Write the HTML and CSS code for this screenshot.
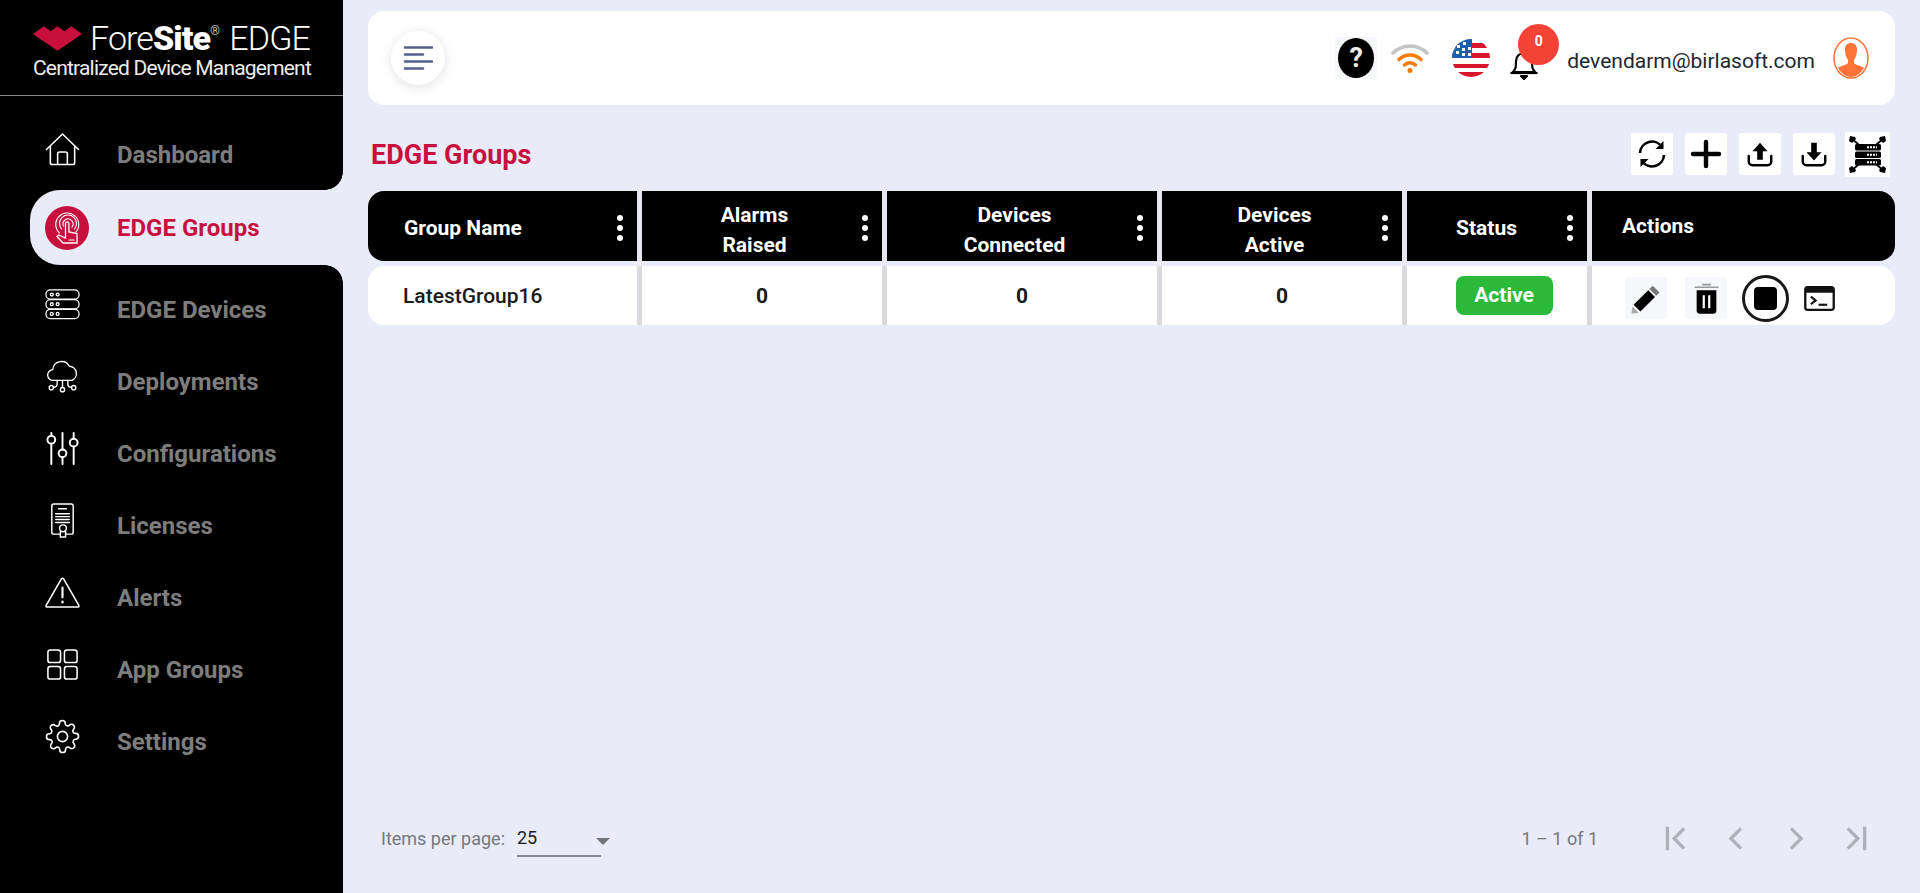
FILE: index.html

```html
<!DOCTYPE html>
<html lang="en">
<head>
  <meta charset="UTF-8" />
  <title>ForeSite EDGE - EDGE Groups</title>
  <link rel="stylesheet" href="styles.css">
</head>
<body>
  <aside class="sidebar">
    <div class="brand">
      <div class="brand-top">
        <svg class="brand-mark" viewBox="0 0 50 26"><path fill="#c8103e" d="M0 9 11 1l7 5 7-5 7 5 7-5 11 8-25 17z"/></svg>
        <span class="brand-name">Fore<b>Site</b><sup>®</sup> EDGE</span>
      </div>
      <div class="brand-sub">Centralized Device Management</div>
    </div>

    <nav class="nav">
      <a class="nav-item">
        <svg class="nav-icon" viewBox="0 0 36 36" fill="none" stroke="#fff" stroke-width="1.6" stroke-linejoin="round" stroke-linecap="round"><path d="M1.5 18 18 2l16.500 16"/><path d="M5.500 15v16.500a2 2 0 0 0 2 2h21a2 2 0 0 0 2-2V15"/><path d="M13 33.500V22.500a2 2 0 0 1 2-2h6a2 2 0 0 1 2 2v11"/></svg>
        <span>Dashboard</span>
      </a>
      <a class="nav-item active">
        <svg class="nav-icon big" viewBox="0 0 44 44" fill="none" stroke="#fff" stroke-width="1.1" stroke-linecap="round"><circle cx="22" cy="22" r="22" fill="#c8103e" stroke="none"/><path d="M14.500 27a11.500 11.500 0 1 1 16.500-1"/><path d="M16.500 23a8.500 8.500 0 1 1 13 0"/><path d="M18.500 20a5 5 0 1 1 8.500 1"/><path d="M20.500 17.500a1.700 1.700 0 0 1 3.400 0V26l8.100 1.500V37H18l-6-6.500 1.500-1.500 7 3z" fill="#c8103e" stroke-width="1.300"/><path d="M24 34h5"/></svg>
        <span>EDGE Groups</span>
      </a>
      <a class="nav-item">
        <svg class="nav-icon" viewBox="0 0 36 32" fill="none" stroke="#fff" stroke-width="1.3"><rect x="1" y="1" width="34" height="9.500" rx="4.500"/><rect x="1" y="11" width="34" height="9.500" rx="4.500"/><rect x="1" y="21" width="34" height="9.500" rx="4.500"/><circle cx="7" cy="5.700" r="1.500"/><circle cx="13" cy="5.700" r="1.500"/><circle cx="7" cy="15.700" r="1.500"/><circle cx="13" cy="15.700" r="1.500"/><circle cx="7" cy="25.700" r="1.500"/><circle cx="13" cy="25.700" r="1.500"/></svg>
        <span>EDGE Devices</span>
      </a>
      <a class="nav-item">
        <svg class="nav-icon" viewBox="0 0 36 36" fill="none" stroke="#fff" stroke-width="1.4" stroke-linecap="round" stroke-linejoin="round"><path d="M10 22H8.500a5.500 5.500 0 0 1-.5-11 9 9 0 0 1 17-3.500 7.500 7.500 0 0 1 2.500 14.500z"/><path d="M12.500 22v4a3 3 0 0 1-3 3H8.500"/><path d="M18 22v7.500"/><path d="M23.500 22v4a3 3 0 0 0 3 3h1"/><circle cx="6.500" cy="29.500" r="2.200"/><circle cx="18" cy="31.500" r="2.200"/><circle cx="29.500" cy="29.500" r="2.200"/></svg>
        <span>Deployments</span>
      </a>
      <a class="nav-item">
        <svg class="nav-icon" viewBox="0 0 36 36" fill="none" stroke="#fff" stroke-width="2" stroke-linecap="round"><path d="M6.500 2v3M6.500 13v21M18 2v17M18 27v7M29.500 2v6M29.500 16v18"/><circle cx="6.500" cy="9" r="4"/><circle cx="18" cy="23" r="4"/><circle cx="29.500" cy="12" r="4"/></svg>
        <span>Configurations</span>
      </a>
      <a class="nav-item">
        <svg class="nav-icon" viewBox="0 0 36 36" fill="none" stroke="#fff" stroke-width="1.5" stroke-linecap="round" stroke-linejoin="round"><path d="M15 32H9a2 2 0 0 1-2-2V3a2 2 0 0 1 2-2h18a2 2 0 0 1 2 2v27a2 2 0 0 1-2 2h-5"/><path d="M14 6h8M11 11h14M11 14h14M11 17h14M11 20h14"/><circle cx="18.500" cy="26" r="3.500"/><path d="M15.800 29v6h5.400v-6"/></svg>
        <span>Licenses</span>
      </a>
      <a class="nav-item">
        <svg class="nav-icon" viewBox="0 0 36 32" fill="none" stroke="#fff" stroke-width="1.6" stroke-linejoin="round" stroke-linecap="round"><path d="M17 1.800a1.200 1.200 0 0 1 2 0L34.800 29.300a1.200 1.200 0 0 1-1 1.700H2.200a1.200 1.200 0 0 1-1-1.700z"/><path d="M18 11v10" stroke-width="2.200"/><path d="M18 25.500v.5" stroke-width="2.400"/></svg>
        <span>Alerts</span>
      </a>
      <a class="nav-item">
        <svg class="nav-icon" viewBox="0 0 36 36" fill="none" stroke="#fff" stroke-width="1.6"><rect x="3" y="3" width="13" height="13" rx="2.500"/><rect x="20" y="3" width="13" height="13" rx="2.500"/><rect x="3" y="20" width="13" height="13" rx="2.500"/><rect x="20" y="20" width="13" height="13" rx="2.500"/></svg>
        <span>App Groups</span>
      </a>
      <a class="nav-item">
        <svg class="nav-icon" viewBox="0 0 24 24" fill="none" stroke="#fff" stroke-width="1.100" stroke-linejoin="round"><circle cx="12" cy="12" r="3.500"/><path d="M19.400 15a1.650 1.650 0 0 0 .33 1.820l.06.06a2 2 0 1 1-2.830 2.830l-.06-.06a1.650 1.650 0 0 0-2.800 1.170V21a2 2 0 1 1-4 0v-.09a1.650 1.650 0 0 0-2.800-1.170l-.06.06a2 2 0 1 1-2.830-2.830l.06-.06a1.650 1.650 0 0 0-1.170-2.800H3a2 2 0 1 1 0-4h.09a1.650 1.650 0 0 0 1.170-2.800l-.06-.06a2 2 0 1 1 2.830-2.830l.06.06a1.650 1.650 0 0 0 2.800-1.170V3a2 2 0 1 1 4 0v.09a1.650 1.650 0 0 0 2.800 1.170l.06-.06a2 2 0 1 1 2.830 2.830l-.06.06a1.650 1.650 0 0 0 1.170 2.800H21a2 2 0 1 1 0 4h-.09a1.650 1.650 0 0 0-1.510 1z"/></svg>
        <span>Settings</span>
      </a>
    </nav>
  </aside>

  <main class="main">
    <header class="topbar">
      <button class="menu-btn">
        <svg viewBox="0 0 30 24" width="30" height="24" stroke="#55608f" stroke-width="2.600" stroke-linecap="round"><path d="M2 3h27M2 10h18M2 17h27M2 24h18" transform="translate(0 -1.500)"/></svg>
      </button>
      <div class="topbar-right">
        <span class="help-btn"><span class="help-dot">?</span></span>
        <svg class="wifi" viewBox="0 0 38 32" width="38" height="32" fill="none" stroke-linecap="round" stroke-width="3.500"><path d="M2 11a24 24 0 0 1 34 0" stroke="#c4c4c4"/><path d="M8 17.500a16 16 0 0 1 22 0" stroke="#f57c00"/><path d="M13.500 23a8 8 0 0 1 11 0" stroke="#f57c00"/><circle cx="19" cy="28.500" r="2.500" fill="#f57c00" stroke="none"/></svg>
        <svg class="flag" viewBox="0 0 38 38" width="38" height="38"><defs><clipPath id="flag-clip"><ellipse cx="19" cy="19" rx="19" ry="19"/></clipPath></defs><g clip-path="url(#flag-clip)"><rect width="38" height="38" fill="#fff"/><path fill="#d9142b" d="M0 4h38v5H0zM0 14h38v5H0zM0 25h38v4H0zM0 33h38v5H0z"/><rect width="20" height="19" fill="#1b5fb0"/><path fill="#fff" d="M5 6h3v3H5zM11 3h3v3h-3zM16 8h3v3h-3zM10 9h3v3h-3zM4 12h3v3H4zM10 14h3v3h-3zM16 14h3v3h-3z"/></g></svg>
        <span class="bell">
          <svg viewBox="0 0 30 36" width="30" height="36" fill="none" stroke="#000" stroke-width="2.200" stroke-linejoin="round"><path d="M4 28c3-3 3-6 3-11a8 8 0 0 1 16 0c0 5 0 8 3 11z"/><path d="M1.500 29h27"/><path d="M12 32h6l-3 3z" fill="#000"/></svg>
          <span class="badge">0</span>
        </span>
        <span class="user-mail">devendarm@birlasoft.com</span>
        <svg class="avatar" viewBox="0 0 36 42" width="36" height="42"><ellipse cx="18" cy="21" rx="17" ry="20" fill="#fff" stroke="#ff7338" stroke-width="1.500"/><path fill="#ff7338" d="M12 12c0-4 3-6 6-6s6 2 6 6c0 5-1 8-3 11v3c1 2 8 3 10 5-3 5-8 9-13 9s-10-4-13-9c2-2 9-3 10-5v-3c-2-3-3-6-3-11z"/></svg>
      </div>
    </header>

    <div class="title-row">
      <h1 class="page-title">EDGE Groups</h1>
      <div class="toolbar">
        <span class="tool-btn"><svg viewBox="0 0 32 32" width="32" height="32" fill="none" stroke="#000" stroke-width="2.600"><path d="M4 15a12 12 0 0 1 22-6"/><path d="M28 17a12 12 0 0 1-22 6"/><path d="M27.500 3v8h-8" stroke-width="0" fill="#000"/><path d="M4.500 29v-8h8" stroke-width="0" fill="#000"/></svg></span>
        <span class="tool-btn"><svg viewBox="0 0 32 32" width="32" height="32" stroke="#000" stroke-width="4.400" stroke-linecap="round"><path d="M16 4v24M3 16h26"/></svg></span>
        <span class="tool-btn"><svg viewBox="0 0 32 32" width="30" height="30"><path fill="none" stroke="#000" stroke-width="2.600" stroke-linecap="round" d="M4 18v6a4 4 0 0 0 4 4h16a4 4 0 0 0 4-4v-6"/><path d="M16 4 8 13h5v9h6v-9h5z"/></svg></span>
        <span class="tool-btn"><svg viewBox="0 0 32 32" width="30" height="30"><path fill="none" stroke="#000" stroke-width="2.600" stroke-linecap="round" d="M4 18v6a4 4 0 0 0 4 4h16a4 4 0 0 0 4-4v-6"/><path d="M16 23 8 14h5V4h6v10h5z"/></svg></span>
        <span class="tool-btn wide"><svg viewBox="0 0 45 45" width="45" height="45"><path fill="none" stroke="#000" stroke-width="1.800" stroke-linecap="round" d="M6 6l7 6M39 6l-7 6M6 39l7-6M39 39l-7-6"/><path d="M4 9l1-5 5 1 1 2-4 4zM41 9l-1-5-5 1-1 2 4 4zM4 36l1 5 5-1 1-2-4-4zM41 36l-1 5-5-1-1-2 4-4z"/><rect x="10" y="12" width="26" height="6.500" rx="1.500"/><rect x="10" y="19.500" width="26" height="6.500" rx="1.500"/><rect x="10" y="27" width="26" height="6.500" rx="1.500"/><path stroke="#fff" stroke-width="2" d="M22 15.200h10M22 22.700h10M22 30.200h10" stroke-dasharray="2 1"/></svg></span>
      </div>
    </div>

    <section class="grid-table">
      <div class="cell head left first"><span class="head-label">Group Name</span><i class="kebab"></i></div>
      <div class="cell head two-line"><span class="head-label">Alarms<br>Raised</span><i class="kebab"></i></div>
      <div class="cell head two-line"><span class="head-label">Devices<br>Connected</span><i class="kebab"></i></div>
      <div class="cell head two-line"><span class="head-label">Devices<br>Active</span><i class="kebab"></i></div>
      <div class="cell head status-head"><span class="head-label">Status</span><i class="kebab"></i></div>
      <div class="cell head left last actions-head"><span class="head-label">Actions</span></div>

      <div class="cell row left first">LatestGroup16</div>
      <div class="cell row">0</div>
      <div class="cell row">0</div>
      <div class="cell row">0</div>
      <div class="cell row status-cell"><span class="status">Active</span></div>
      <div class="cell row last actions">
        <span class="act-btn"><svg viewBox="0 0 32 32" width="36" height="36"><path d="M22 5l6 6-3 3-6-6z" fill="#777"/><path d="M18 9l6 6-13 13-6-6z"/><path d="M4 23.500 9.500 29 3 30z" fill="#aaa"/></svg></span>
        <span class="act-btn"><svg viewBox="0 0 32 32" width="35" height="35"><path d="M5 5h22v1.500H5zM12 2.500h8V4h-8z" fill="#999"/><path d="M7 8.500h18V27a3 3 0 0 1-3 3H10a3 3 0 0 1-3-3z"/><path d="M12.500 13h2v12h-2zM17.500 13h2v12h-2z" fill="#fff"/></svg></span>
        <span class="stop-btn"><span class="stop-square"></span></span>
        <svg class="term" viewBox="0 0 32 26" width="31" height="25"><rect x="1.200" y="1.200" width="29.600" height="23.600" rx="2.500" fill="#fff" stroke="#111" stroke-width="2.400"/><rect x="1" y="1" width="30" height="6" fill="#111"/><path d="M7 11l5 4-5 4" fill="none" stroke="#111" stroke-width="2.200"/><path d="M15 19.500h9" stroke="#111" stroke-width="2.200"/></svg>
      </div>
    </section>

    <footer class="pager">
      <div class="pager-size">
        <span class="pager-label">Items per page:</span>
        <div class="pager-select"><span>25</span><i class="select-arrow"></i></div>
      </div>
      <div class="pager-nav">
        <span class="pager-range">1 – 1 of 1</span>
        <svg class="pg-icon first-pg" viewBox="0 0 24 24" width="27" height="27" fill="none" stroke="#afb1ba" stroke-width="3"><path d="M3 1.500v21M18 3 9 12l9 9"/></svg>
        <svg class="pg-icon" viewBox="0 0 24 24" width="27" height="27" fill="none" stroke="#afb1ba" stroke-width="3"><path d="M16 3l-9 9 9 9"/></svg>
        <svg class="pg-icon" viewBox="0 0 24 24" width="27" height="27" fill="none" stroke="#afb1ba" stroke-width="3"><path d="M8 3l9 9-9 9"/></svg>
        <svg class="pg-icon" viewBox="0 0 24 24" width="27" height="27" fill="none" stroke="#afb1ba" stroke-width="3"><path d="M21 1.500v21M6 3l9 9-9 9"/></svg>
      </div>
    </footer>
  </main>
</body>
</html>
```

FILE: styles.css

```css
* {
  box-sizing: border-box;
}
html, body {
  height: 100%;
}
body {
  margin: 0;
  display: flex;
  overflow: hidden;
  font-family: Roboto, "Liberation Sans", sans-serif;
  background: #e9ecf8;
  color: #1a1a1a;
}

/* sidebar */
.sidebar {
  width: 343px;
  flex: none;
  background: #000;
  color: #fff;
}
.brand {
  height: 96px;
  padding: 20px 0 0 33px;
  border-bottom: 1px solid #8a8a8a;
}
.brand-top {
  display: flex;
  align-items: center;
  gap: 8px;
  height: 36px;
}
.brand-mark {
  width: 49px;
  height: 26px;
}
.brand-name {
  font-size: 34px;
  font-weight: 300;
  letter-spacing: -0.9px;
  white-space: nowrap;
}
.brand-name b {
  font-weight: 900;
}
.brand-name sup {
  font-size: 12px;
  vertical-align: 15px;
  line-height: 0;
  margin-right: 3px;
}
.brand-sub {
  font-size: 21px;
  font-weight: 400;
  color: #eee;
  letter-spacing: -0.8px;
  line-height: 24px;
  white-space: nowrap;
}
.nav {
  padding-top: 22px;
}
.nav-item {
  position: relative;
  display: flex;
  align-items: center;
  height: 72px;
  padding-left: 45px;
  font-size: 24px;
  font-weight: 700;
  color: #7d7d7d;
}
.nav-item span {
  position: absolute;
  left: 117px;
  margin-top: 2px;
}
.nav-icon {
  width: 35px;
  height: 35px;
  margin-top: -9px;
}
.nav-icon.big {
  width: 44px;
  height: 44px;
  margin-top: 0;
}
.nav-item.active {
  height: 75px;
  margin: 0 0 8px 30px;
  padding-left: 15px;
  background: #e9ecf8;
  color: #c8103e;
  border-radius: 30px 0 0 30px;
}
.nav-item.active span {
  left: 87px;
  margin-top: 0;
}
.nav-item.active::before,
.nav-item.active::after {
  content: "";
  position: absolute;
  right: 0;
  width: 18px;
  height: 18px;
}
.nav-item.active::before {
  top: -18px;
  background: radial-gradient(circle at 0 0, #000 17.500px, #e9ecf8 18px);
}
.nav-item.active::after {
  bottom: -18px;
  background: radial-gradient(circle at 0 100%, #000 17.500px, #e9ecf8 18px);
}

/* main column */
.main {
  flex: 1;
  display: flex;
  flex-direction: column;
  min-width: 0;
  padding: 11px 25px 0;
}
.topbar {
  height: 94px;
  flex: none;
  display: flex;
  align-items: center;
  justify-content: space-between;
  padding: 0 26px 0 23px;
  background: #fff;
  border-radius: 16px;
}
.menu-btn {
  width: 54px;
  height: 54px;
  padding: 0;
  display: flex;
  align-items: center;
  justify-content: center;
  background: #fff;
  border: 0;
  border-radius: 50%;
  box-shadow: 0 2px 12px rgba(0, 0, 0, 0.12);
}
.topbar-right {
  display: flex;
  align-items: center;
  height: 100%;
}
.help-btn {
  width: 42px;
  height: 42px;
  display: flex;
  align-items: center;
  justify-content: center;
  background: #f5f7fa;
  border-radius: 2px;
}
.help-dot {
  width: 36px;
  height: 40px;
  border-radius: 50%;
  background: #000;
  color: #eee;
  font-size: 27px;
  font-weight: 700;
  line-height: 40px;
  text-align: center;
}
.wifi {
  margin-left: 14px;
}
.flag {
  margin-left: 23px;
}
.bell {
  position: relative;
  display: flex;
  margin-left: 19px;
  margin-top: 8px;
}
.badge {
  position: absolute;
  top: -20px;
  left: 9px;
  width: 41px;
  height: 41px;
  border-radius: 50%;
  background: #f44336;
  color: #fff;
  font-size: 14px;
  font-weight: 700;
  line-height: 34px;
  text-align: center;
}
.user-mail {
  margin-left: 28px;
  margin-top: 5px;
  font-size: 21px;
  color: #1c2733;
}
.avatar {
  margin-left: 18px;
}

.title-row {
  height: 86px;
  flex: none;
  display: flex;
  align-items: center;
  justify-content: space-between;
  padding-top: 12px;
}
.page-title {
  margin: 2px 0 0 3px;
  font-size: 27px;
  font-weight: 700;
  color: #c8103e;
}
.toolbar {
  display: flex;
  align-items: center;
  gap: 12px;
  margin-right: 5px;
}
.tool-btn {
  width: 42px;
  height: 42px;
  display: flex;
  align-items: center;
  justify-content: center;
  background: #fff;
  border-radius: 3px;
}
.tool-btn.wide {
  width: 45px;
  height: 45px;
  margin-left: -2px;
  border-radius: 0;
}

/* table */
.grid-table {
  display: grid;
  grid-template-columns: 274px 245px 275px 245px 185px 303px;
  grid-template-rows: 70px 59px;
  row-gap: 5px;
}
.cell {
  display: flex;
  align-items: center;
  justify-content: center;
  border-right: 5px solid #d9d9de;
  font-size: 21px;
  font-weight: 700;
}
.head {
  position: relative;
  padding-top: 3px;
  padding-right: 15px;
  background: #000;
  background-clip: padding-box;
  border-right-color: #e4e5ee;
  color: #fff;
  font-size: 21px;
  line-height: 30px;
  text-align: center;
}
.head.two-line {
  padding-top: 7px;
}
.head.status-head {
  padding-right: 21px;
}
.head.left {
  justify-content: flex-start;
  padding-left: 36px;
}
.actions-head {
  padding-top: 0;
  padding-left: 30px !important;
  border-right: 0;
}
.kebab {
  position: absolute;
  right: 14px;
  top: 50%;
  width: 6px;
  height: 6px;
  margin-top: -11px;
  border-radius: 50%;
  background: #fff;
  box-shadow: 0 10px 0 #fff, 0 20px 0 #fff;
}
.row {
  background: #fff;
  background-clip: padding-box;
}
.row.left {
  justify-content: flex-start;
  padding-left: 35px;
  font-weight: 500;
}
.first {
  border-radius: 16px 0 0 16px;
}
.last {
  border-right: 0;
  border-radius: 0 16px 16px 0;
}
.status-cell {
  padding-left: 14px;
}
.status {
  width: 97px;
  height: 39px;
  border-radius: 8px;
  background: #2bb93a;
  color: #fff;
  line-height: 39px;
  text-align: center;
}
.actions {
  justify-content: flex-start;
  padding: 5px 0 0 33px;
}
.act-btn {
  width: 42px;
  height: 42px;
  margin-right: 18px;
  display: flex;
  align-items: center;
  justify-content: center;
  background: #f5f7fa;
  border-radius: 3px;
}
.stop-btn {
  width: 47px;
  height: 47px;
  display: flex;
  align-items: center;
  justify-content: center;
  border: 3px solid #1a1a1a;
  border-radius: 50%;
  margin-left: -3px;
}
.stop-square {
  width: 23px;
  height: 23px;
  border-radius: 4px;
  background: #000;
}
.term {
  margin-left: 15px;
}

/* pagination */
.pager {
  margin-top: auto;
  height: 62px;
  margin-bottom: 24px;
  flex: none;
  display: flex;
  align-items: center;
  justify-content: space-between;
  padding-left: 13px;
}
.pager-size {
  display: flex;
  align-items: center;
}
.pager-label {
  font-size: 18px;
  color: #76777f;
}
.pager-select {
  position: relative;
  width: 84px;
  height: 36px;
  margin-left: 12px;
  margin-top: 2px;
  padding-top: 6px;
  font-size: 18px;
  border-bottom: 2px solid #8b8b92;
}
.select-arrow {
  position: absolute;
  right: -9px;
  top: 17px;
  border-left: 7px solid transparent;
  border-right: 7px solid transparent;
  border-top: 7px solid #74747c;
}
.pager-nav {
  display: flex;
  align-items: center;
  gap: 32px;
  padding-right: 27px;
}
.pager-range {
  font-size: 18px;
  color: #76777f;
  margin-right: 34px;
}
```
